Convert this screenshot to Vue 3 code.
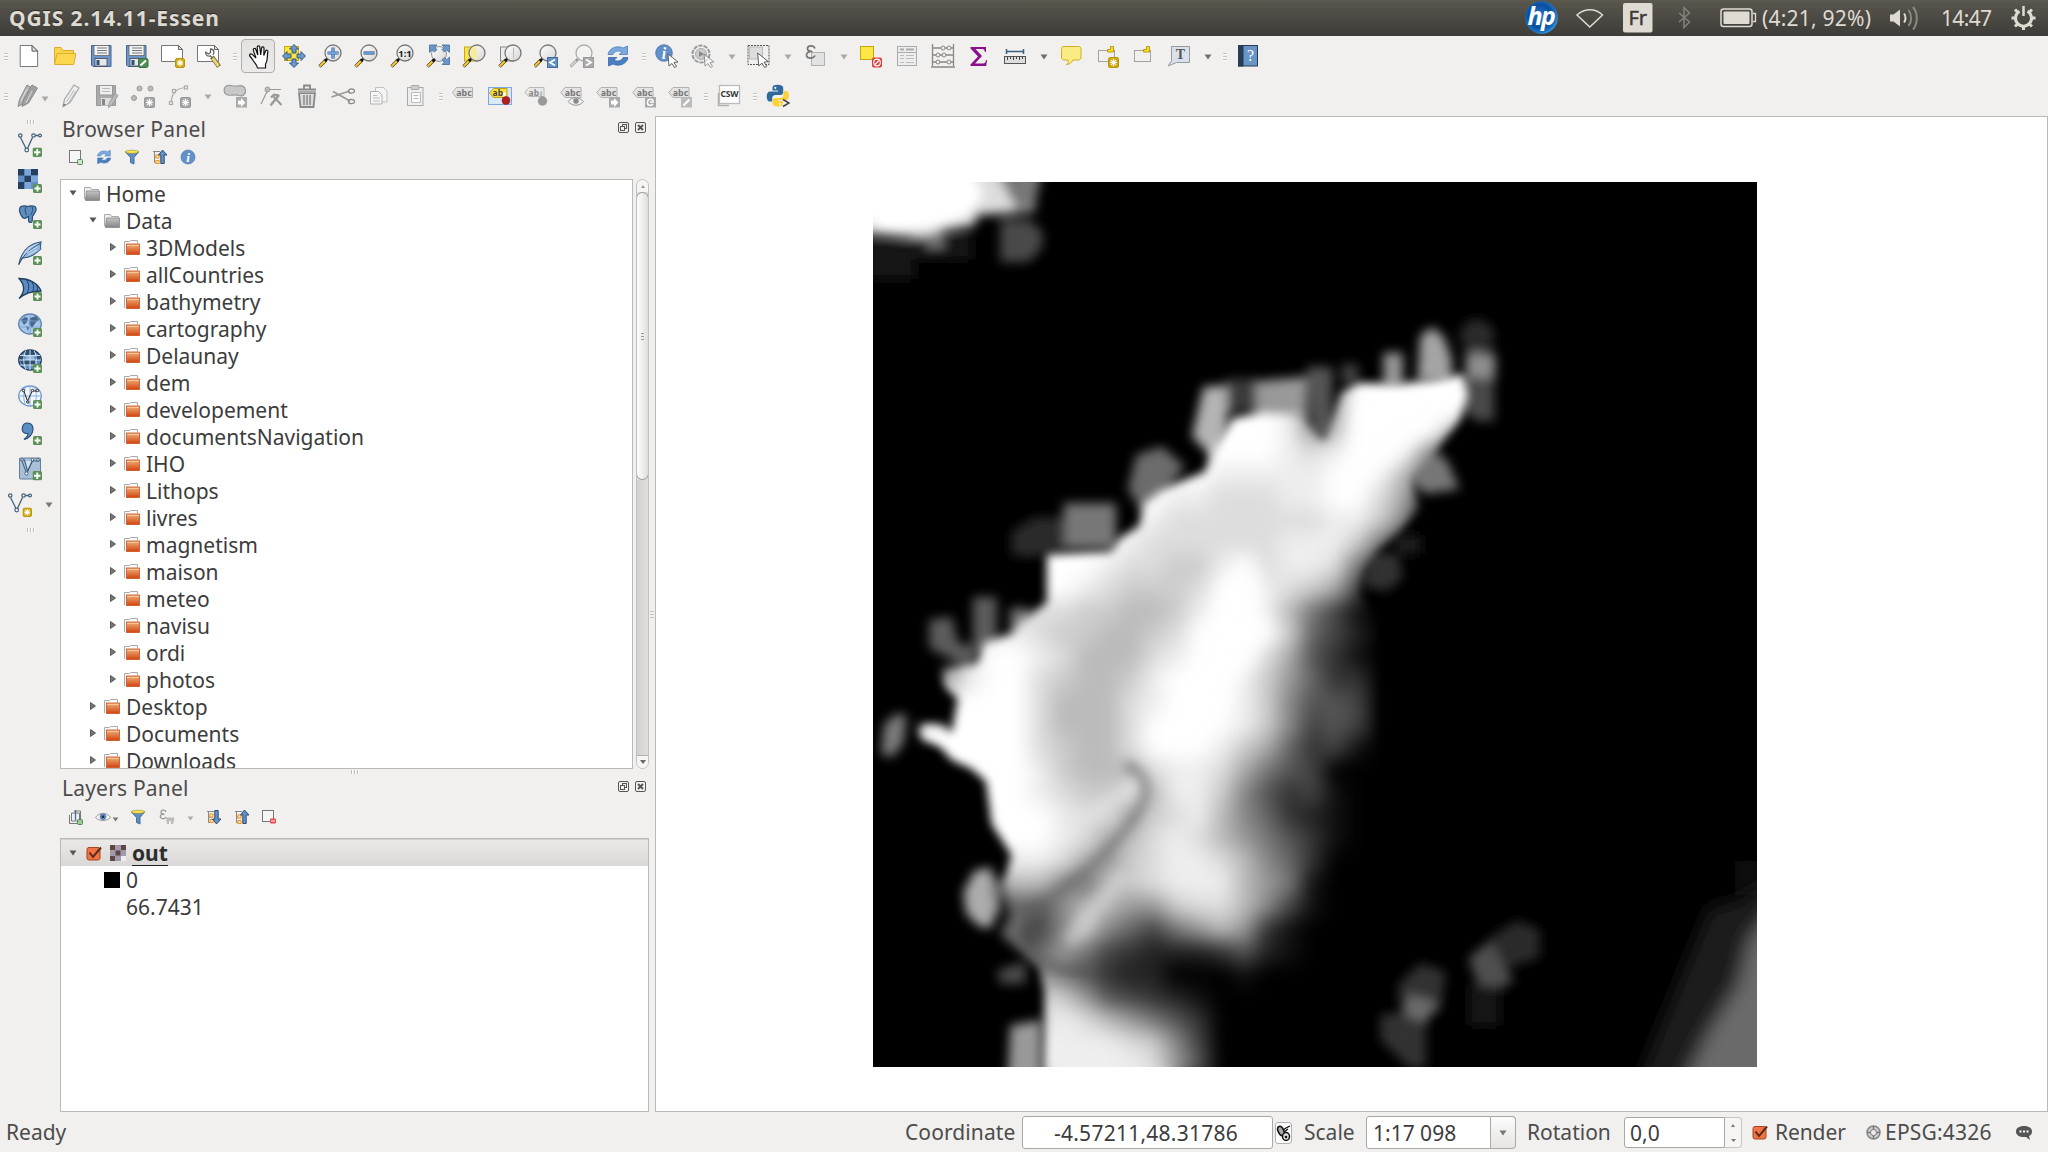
<script setup>
const h = { k: 'handle' }
const a = { k: 'arrow' }
const ad = { k: 'arrow', dark: true }
const i = (...names) => names.map((n) => ({ k: 'icon', n }))

const rowOne = [
  h, ...i('new', 'open', 'save', 'saveas', 'newprint', 'composer'),
  h, { k: 'icon', n: 'hand', on: true },
  ...i('pan', 'zoomin', 'zoomout', 'zoomone', 'zoomfull', 'zoomsel', 'zoomlayer', 'zoomlast', 'zoomnext', 'refresh'),
  h, ...i('identify', 'action'), a, ...i('select'), a, ...i('expr'), a,
  ...i('deselect', 'table', 'abacus', 'sigma', 'measure'), ad,
  ...i('tip', 'newbookmark', 'bookmark', 'annotation'), ad,
  h, ...i('help'),
]
const rowTwo = [
  h, { k: 'icon', n: 'pencils', wide: true }, ...i('pencil', 'saveedit', 'points', 'curve'), a,
  ...i('blob', 'node', 'trash', 'cut', 'copy', 'paste'),
  h, ...i('label', 'labelpin', 'labelball', 'labeleye', 'labelmove', 'labelrotate', 'labeledit'),
  h, ...i('csw'), h, ...i('python'),
]
const leftBar = ['vector', 'raster', 'postgis', 'spatialite', 'mssql', 'wms', 'wcs', 'wfs', 'comma', 'virtual']
const browserTools = ['addlayer', 'refresh', 'filter', 'collapse', 'info']

const tree = [
  { t: 'Home', l: 0, open: true },
  { t: 'Data', l: 1, open: true },
  ...['3DModels', 'allCountries', 'bathymetry', 'cartography', 'Delaunay', 'dem', 'developement',
    'documentsNavigation', 'IHO', 'Lithops', 'livres', 'magnetism', 'maison', 'meteo', 'navisu',
    'ordi', 'photos'].map((t) => ({ t, l: 2 })),
  { t: 'Desktop', l: 1 },
  { t: 'Documents', l: 1 },
  { t: 'Downloads', l: 1 },
]

// Elevation samples on a 40-unit lattice, one hex digit per sample (0 = black, f = white)
const samples = [
  'ffffffffffffffffea9fffffff',
  'ffffffffffffffffe7afffffff',
  'ffffffffffffffffe9bffffc80',
  'ffffffffffffffffedeffe9600',
  'fffffffffffffeeeeeffeb7500',
  'fffffffffffeedddeeffda3000',
  'ffffffffffedddddddeec80000',
  'fffffffffeddddddeeec730000'.slice(0, 26),
  'ffffffffeddccefdeed7300000',
  'fffffffedcccdffedca4000000',
  'eeeedddccbbceffeb741000000',
  'eeeeedccbbcdffffc642000000',
  'bceffedbbbdefffda531000000',
  'aaeffdcbbcefffec9633000000',
  'fffffdbbbdefffec8554000000',
  'fffffdbbbdffffec8454000000',
  'fffffdcbbdfffeca6341000000',
  'fffffecbbbdeeda75400000000',
  'fffffedccdbeec853410000000',
  'ffffffeddacdeb863210000000',
  'ffffffedabdedb975310000000',
  'eeeeeeda9cdeedb86300000000',
  'aaaabb87bcdeeeb97100000000',
  '6666658bb99cddb84100000000',
  '5555548c86479b931000000000',
  '44444697432223521000000000',
  '33333975322000100000000000',
  '22222dc9543210000000000000',
  '44444dedb97530000000000000',
  '77777eeeedc840000000000000',
  '88888eeeeed950000000000000',
]
const cells = samples.flatMap((row, r) =>
  [...row].map((d, c) => {
    const g = parseInt(d, 16) * 17
    return { x: 80 + c * 40, y: 340 + r * 40, fill: `rgb(${g},${g},${g})` }
  }),
)
</script>

<template>
  <div class="app">
    <svg class="defs" width="0" height="0">
      <defs>
        <linearGradient id="g-orange" x1="0" y1="0" x2="0" y2="1"><stop offset="0" stop-color="#eeb27c" /><stop offset="1" stop-color="#d3430f" /></linearGradient>
        <linearGradient id="g-grey" x1="0" y1="0" x2="0" y2="1"><stop offset="0" stop-color="#c4c4c4" /><stop offset="1" stop-color="#848484" /></linearGradient>
        <linearGradient id="g-lens" x1="0" y1="0" x2="1" y2="1"><stop offset="0" stop-color="#fff" /><stop offset="1" stop-color="#d4d6d4" /></linearGradient>
        <radialGradient id="g-hp" cx=".45" cy=".45" r=".6"><stop offset="0" stop-color="#2478c8" /><stop offset=".6" stop-color="#0a4d9e" /><stop offset=".85" stop-color="#1b78c8" /><stop offset="1" stop-color="#4cc0f2" /></radialGradient>
      </defs>
    </svg>
    <svg class="symbols">
      <symbol id="plus" viewBox="0 0 9 9"><rect width="9" height="9" rx="1.6" fill="#5b9057" /><path d="M4.5 1.5v6M1.500 4.500h6" stroke="#fff" stroke-width="1.800" /></symbol>
      <symbol id="star" viewBox="0 0 10 10"><rect x=".5" y=".5" width="9" height="9" rx="1.6" fill="#d0ab10" stroke="#b8950a" /><path d="M5 1.6v6.8M1.8 5h6.4M2.6 2.8l4.8 4.4M7.4 2.8L2.6 7.2" stroke="#fff" stroke-width="1.1" /></symbol>
      <symbol id="stargrey" viewBox="0 0 10 10"><rect x=".5" y=".5" width="9" height="9" rx="1.4" fill="#a8a8a8" stroke="#999" /><path d="M5 1.6v6.8M1.8 5h6.4M2.6 2.8l4.8 4.4M7.4 2.8L2.6 7.2" stroke="#fff" stroke-width="1.1" /></symbol>
      <symbol id="lens" viewBox="0 0 24 24"><path d="M1.500 22.500L8 16" stroke="#444" stroke-width="3.400" /><path d="M1.700 22.300L7 17" stroke="#f6c52c" stroke-width="2.200" /><path d="M7 17l2.600-2.600" stroke="#111" stroke-width="2.600" /><circle cx="15" cy="9" r="8" fill="url(#g-lens)" stroke="#777" stroke-width="1.300" /></symbol>

      <symbol id="new" viewBox="0 0 24 24"><path d="M3.2 1.5H15l5.6 5.6v15.4H3.2z" fill="#fff" stroke="#777" /><path d="M15 1.5l5.6 5.6H15z" fill="#e4e4e4" stroke="#555" /></symbol>
      <symbol id="open" viewBox="0 0 24 24"><path d="M1.500 20.500V3.500h6.500l2 3h10.500v4.500" fill="#fbd44a" stroke="#dca92c" /><path d="M1.500 20.500L4 9.500h18.800l-2 11z" fill="#fdd84f" stroke="#dfae2e" /></symbol>
      <symbol id="save" viewBox="0 0 24 24"><path d="M2.500 1.500h19.500v21H4l-1.500-1.500z" fill="#6b97cb" stroke="#44658f" /><rect x="5" y="1.500" width="15" height="10" fill="#f4f4f4" stroke="#666" stroke-width=".8" /><path d="M8 4h10M8 6.500h10M8 9h10" stroke="#777" /><rect x="6" y="14.500" width="12" height="7.500" fill="#e8e8e8" stroke="#445" stroke-width=".8" /><rect x="7.500" y="16" width="3" height="5" fill="#2f5177" /></symbol>
      <symbol id="saveas" viewBox="0 0 24 24"><use href="#save" width="24" height="24" x="-1" /><rect x="13.500" y="14.500" width="9.500" height="9" rx="1.500" fill="#4f8c55" stroke="#39743f" /><path d="M15.500 21.500l5.500-5" stroke="#fff" stroke-width="2" /></symbol>
      <symbol id="newprint" viewBox="0 0 24 24"><path d="M.5 1.500h17l4 4v12H.5z" fill="#fff" stroke="#777" /><path d="M17.500 1.500v4h4z" fill="#ddd" stroke="#666" /><use href="#star" x="14" y="14" width="10" height="10" /></symbol>
      <symbol id="composer" viewBox="0 0 24 24"><path d="M.5 1.500h17l4 4v12H.5z" fill="#fff" stroke="#777" /><path d="M17.500 1.500v4h4z" fill="#ddd" stroke="#666" /><path d="M15 13l7 9.500" stroke="#665a22" stroke-width="4.600" /><path d="M15.500 14l6 8" stroke="#e8d27a" stroke-width="3" /><path d="M8.500 7.500c0 4 2 5 5 4.500l2 2M8.500 8l3 2 2-1.500V5c4 0 4 4 2.500 6" fill="none" stroke="#666" stroke-width="1.300" /></symbol>
      <symbol id="hand" viewBox="0 0 24 24"><path d="M9.500 23c-.5-3-2.500-4.500-4-7C4.200 13.700 3 12.300 1.800 11c-.9-1.800 1.200-2.700 2.700-1.400L8 13 5.300 5.200c-.4-1.800 1.900-2.400 2.500-.7l2 5.500-.6-7.700c0-1.800 2.400-1.900 2.600-.1l.9 7.800.9-7c.2-1.700 2.400-1.400 2.400.3l-.2 7.200 1.700-4.500c.7-1.500 2.600-.8 2.300.8-.7 4.500 0 9-2.300 12.200v4z" fill="#fff" stroke="#111" stroke-width="1.200" /></symbol>
      <symbol id="pan" viewBox="0 0 24 24"><rect x="2.500" y="2.500" width="14" height="14" fill="#fde43d" stroke="#c5a70e" /><g fill="#6b97cb" stroke="#2e5580" stroke-width=".9"><path d="M12 .5l4.500 4.500H14v4h-4V5H7.500zM12 23.500L7.500 19H10v-4h4v4h2.500zM.5 12L5 7.500V10h4v4H5v2.500zM23.500 12L19 16.500V14h-4v-4h4V7.500z" /></g></symbol>
      <symbol id="zoomin" viewBox="0 0 24 24"><use href="#lens" width="24" height="24" /><path d="M15 3.500v11M9.500 9h11" stroke="#355f91" stroke-width="3.200" /><path d="M15 4v10M10 9h10" stroke="#6fa2db" stroke-width="1.800" /></symbol>
      <symbol id="zoomout" viewBox="0 0 24 24"><use href="#lens" width="24" height="24" /><path d="M9.500 9h11" stroke="#355f91" stroke-width="3.200" /><path d="M10 9h10" stroke="#6fa2db" stroke-width="1.800" /></symbol>
      <symbol id="zoomone" viewBox="0 0 24 24"><use href="#lens" width="24" height="24" /><text x="15" y="12.500" text-anchor="middle" font-family="Noto Sans, sans-serif" font-size="9.500" font-weight="700" fill="#222">1:1</text></symbol>
      <symbol id="zoomfull" viewBox="0 0 24 24"><circle cx="13" cy="10" r="7.500" fill="url(#g-lens)" stroke="#999" /><path d="M1.500 22.500L8 16" stroke="#444" stroke-width="3.400" /><path d="M1.700 22.300L7 17" stroke="#f6c52c" stroke-width="2.200" /><path d="M6.500 17.500L9 15" stroke="#111" stroke-width="2.600" /><g fill="#6b97cb" stroke="#41699a" stroke-width=".8"><path d="M3.500 1h7.500L8.700 3.300l2.300 2.300-2.500 2.500-2.300-2.300L3.500 8.500zM23.500 1v7.500l-2.700-2.700-2.300 2.300L16 5.600l2.300-2.300L16 1zM23.500 20.500H16l2.300-2.300-2.300-2.300 2.500-2.500 2.300 2.300 2.700-2.700z" /></g></symbol>
      <symbol id="zoomsel" viewBox="0 0 24 24"><rect x="2.500" y="3" width="13" height="14" fill="#fde34a" stroke="#c8a80e" /><use href="#lens" width="24" height="24" /><path d="M15 2.500v13c-4 0-6.500-2.500-6.500-6.500S11 2.500 15 2.500z" fill="#f6ec9b" /></symbol>
      <symbol id="zoomlayer" viewBox="0 0 24 24"><rect x="2.500" y="3" width="13" height="14" fill="#ededed" stroke="#888" /><use href="#lens" width="24" height="24" /><path d="M15.500 3.500v11" stroke="#bbb" /></symbol>
      <symbol id="zoomlast" viewBox="0 0 24 24"><use href="#lens" width="24" height="24" x="-1" /><rect x="13.500" y="13.500" width="10" height="10" fill="#6090c5" stroke="#426c9d" /><path d="M21 15.500l-5 3 5 3" fill="none" stroke="#fff" stroke-width="1.800" /></symbol>
      <symbol id="zoomnext" viewBox="0 0 24 24"><path d="M.5 22.500L8 15" stroke="#999" stroke-width="3" /><path d="M1 22l5-5" stroke="#ddd" stroke-width="1.500" /><circle cx="14" cy="9" r="8" fill="#f3f3f2" stroke="#aaa" stroke-width="1.300" /><rect x="13.500" y="13.500" width="10" height="10" fill="#aaa" stroke="#999" /><path d="M16 15.500l5 3-5 3" fill="none" stroke="#fff" stroke-width="1.800" /></symbol>
      <symbol id="refresh" viewBox="0 0 24 24"><path d="M2 10.500C3 4 11 1 17 4l4.500-2v8.500H13L16 8c-3.500-2-7.500-1-9 2.500z" fill="#7da9dc" stroke="#4a7fc0" stroke-width=".8" /><path d="M22 13.500c-1 6.500-9 9.500-15 6.500L2.500 22v-8.500H11L8 16c3.500 2 7.500 1 9-2.500z" fill="#4a7fc1" stroke="#3769aa" stroke-width=".8" /></symbol>
      <symbol id="cursor" viewBox="0 0 12 15"><path d="M1 1l10 8-4 .5 2.500 4-2 1-2.500-4-3 2.500z" fill="#fff" stroke="#555" stroke-width=".9" /></symbol>
      <symbol id="info" viewBox="0 0 24 24"><circle cx="12" cy="12" r="10.500" fill="#6290c8" stroke="#4a76aa" /><text x="12" y="19" text-anchor="middle" font-family="Liberation Serif, serif" font-size="20" font-style="italic" font-weight="700" fill="#fff">i</text></symbol>
      <symbol id="identify" viewBox="0 0 24 24"><use href="#info" x="-.5" y="-.5" width="19" height="19" /><use href="#cursor" x="12" y="9" width="12" height="15" /></symbol>
      <symbol id="action" viewBox="0 0 24 24"><circle cx="10" cy="10" r="8.500" fill="#eee" stroke="#999" stroke-width="2" stroke-dasharray="4.200 1.100" /><circle cx="10" cy="10" r="5.500" fill="#ccc" stroke="#aaa" /><path d="M8 7l5 3-5 3z" fill="#888" /><use href="#cursor" x="12" y="9" width="12" height="15" opacity=".65" /></symbol>
      <symbol id="select" viewBox="0 0 24 24"><rect x="1" y="1.500" width="21" height="19" fill="none" stroke="#555" stroke-dasharray="2 1" /><rect x="2.500" y="3" width="13" height="12" fill="#ddd" stroke="#bbb" /><use href="#cursor" x="9" y="8" width="14" height="16" /></symbol>
      <symbol id="expr" viewBox="0 0 24 24"><rect x="8.500" y="8.500" width="13" height="13" fill="#e2e2e2" stroke="#b0b0b0" /><path d="M12 4.500C10 0 4 2 4.500 5c.3 2 2.500 2.500 5 2.500-4 0-6.500 1.500-6 4 .8 3.500 7 3.500 8.500 0" fill="none" stroke="#777" stroke-width="1.700" /></symbol>
      <symbol id="deselect" viewBox="0 0 24 24"><rect x="1.500" y="2.500" width="13" height="13" fill="#fde748" stroke="#c4a60b" /><rect x="13" y="13.500" width="10" height="10" rx="2" fill="#dd3a3e" /><circle cx="18" cy="18.500" r="3.300" fill="none" stroke="#fff" stroke-width="1.200" /><path d="M16 20.500l4-4" stroke="#fff" stroke-width="1.200" /></symbol>
      <symbol id="table" viewBox="0 0 24 24"><rect x="2.500" y="2.500" width="19" height="19" fill="#eee" stroke="#aaa" /><path d="M5 5.500h4M11 5.500h8" stroke="#aaa" stroke-width="2" /><path d="M3 8.500h18" stroke="#aaa" /><path d="M5 11.500h4M5 14.500h4M5 18.500h4M11 11.500h8M11 14.500h8M11 18.500h8" stroke="#bbb" stroke-width="1.200" /></symbol>
      <symbol id="abacus" viewBox="0 0 24 24"><path d="M1.500 0v22M22.500 0v22M0 23h24M1 4h22M1 11h22M1 18h22" stroke="#888" stroke-width="1.300" fill="none" /><g fill="#eee" stroke="#888"><circle cx="12" cy="4" r="2" /><circle cx="18" cy="4" r="2" /><circle cx="7" cy="11" r="2" /><circle cx="13" cy="11" r="2" /><circle cx="7" cy="18" r="2" /><circle cx="18" cy="18" r="2" /></g></symbol>
      <symbol id="sigma" viewBox="0 0 24 24"><path d="M3.500 3H19v5h-1c-.5-2-1-3-3-3H8.500l6.500 7-7 7.500h8c2 0 2.500-1 3-3.500h1l-.8 6H3.500v-1.500l7.500-8-7.500-8z" fill="#8a0f8c" /></symbol>
      <symbol id="measure" viewBox="0 0 24 24"><path d="M3.500 7.500h17M3.500 5v5M20.500 5v5" stroke="#38617f" stroke-width="1.500" /><rect x="1.500" y="12.500" width="21" height="7" fill="#ddd" stroke="#555" /><path d="M4.500 13v3M7.500 13v2M10.500 13v3M13.500 13v2M16.500 13v3M19.500 13v2" stroke="#444" /></symbol>
      <symbol id="tip" viewBox="0 0 24 24"><path d="M5 2.500h14.500c2 0 2.500 1 2.500 3v7.500c0 2-1 3-3 3h-5c-1.500 3-4 4.500-6.500 4.500 1.500-1 2-2.500 1.500-4.500H6c-2.500 0-3.500-1-3.500-3V5.500c0-2 .5-3 2.500-3z" fill="#f9ec85" stroke="#d1ad20" /></symbol>
      <symbol id="bookmark" viewBox="0 0 24 24"><rect x="3.500" y="6.500" width="16" height="11" fill="none" stroke="#555" stroke-dasharray="1 1" /><path d="M15.500 2.500h3V8h-6V5.500h3z" fill="#fddc2d" stroke="#bb9a0b" /></symbol>
      <symbol id="newbookmark" viewBox="0 0 24 24"><use href="#bookmark" width="24" height="24" /><use href="#star" x="13" y="13" width="11" height="11" /></symbol>
      <symbol id="annotation" viewBox="0 0 24 24"><path d="M4.500 2.500h18v16h-13L1 22l3.500-5z" fill="#d9e2ec" stroke="#999" /><text x="13.500" y="15" text-anchor="middle" font-family="Liberation Serif, serif" font-weight="700" font-size="14" fill="#555">T</text></symbol>
      <symbol id="help" viewBox="0 0 24 24"><rect x="2.500" y="1.500" width="19" height="20.500" fill="#6894c8" stroke="#273c52" /><rect x="2" y="1" width="5.500" height="21.500" fill="#263d55" /><text x="14.500" y="17" text-anchor="middle" font-family="Liberation Serif, serif" font-size="16" fill="#fff">?</text></symbol>

      <symbol id="pencil" viewBox="0 0 24 24"><path d="M4 22.500l1.500-7L15 1l5 3-9 14.500z" fill="#eee" stroke="#aaa" stroke-width="1.200" /><path d="M15 6L7.500 18M17 7L9.500 19" stroke="#bbb" /><path d="M4 22.500l.7-3 2.300 1.300z" fill="#777" /></symbol>
      <symbol id="pencils" viewBox="0 0 24 24"><g stroke="#888"><path d="M1 22.500l1.500-7L10 1l5 3-8 15z" fill="#b5b5b5" /><path d="M5 22.500l1.500-7L15 1l5.500 3-9 15z" fill="#a0a0a0" /><path d="M10 5L4 17M15 7L9 19" stroke="#ddd" /></g></symbol>
      <symbol id="saveedit" viewBox="0 0 24 24"><path d="M1.500 1.500h19v20h-19z" fill="#aaa" stroke="#999" /><rect x="4.500" y="1.500" width="13" height="9.500" fill="#eee" stroke="#999" /><path d="M7 4.500h8M7 7.500h8" stroke="#bbb" /><rect x="6" y="14" width="11" height="7.500" fill="#ddd" /><rect x="7" y="15" width="3" height="6" fill="#888" /><path d="M13.500 23.500l1-5 5.500-9 3 2-6 9.500z" fill="#bbb" stroke="#999" /></symbol>
      <symbol id="points" viewBox="0 0 24 24"><g fill="#bbb" stroke="#999"><circle cx="8.500" cy="4.500" r="2.500" /><circle cx="19.500" cy="4.500" r="2.500" /><circle cx="3" cy="14" r="2.500" /></g><use href="#stargrey" x="13" y="13" width="11" height="11" /></symbol>
      <symbol id="curve" viewBox="0 0 24 24"><g fill="none" stroke="#aaa" stroke-width="1.200"><path d="M4 19C5 8 9 4 20 3.500" /><g fill="#f1f0ee"><rect x="2.500" y="17.500" width="3" height="3" /><rect x="5.500" y="5.500" width="3" height="3" /><rect x="17.500" y="2" width="3" height="3" /></g></g><use href="#stargrey" x="13" y="13" width="11" height="11" /></symbol>
      <symbol id="blob" viewBox="0 0 24 24"><path d="M4.500 1.500c3.500-1 6 1.500 10 .5s7.500 0 8 4-2.500 7-7 5.500-7 .5-10.500-.5C0 10 0 3 4.500 1.500z" fill="#c8c8c8" stroke="#999" stroke-width="1.200" /><rect x="13" y="13" width="11" height="10.500" fill="#aaa" /><path d="M15 16.500h3V14l4.500 4.500L18 23v-2.500h-3z" fill="#fff" /></symbol>
      <symbol id="node" viewBox="0 0 24 24"><path d="M2 20L8 7.500M11 5.500h11" stroke="#999" stroke-width="1.200" /><circle cx="8.500" cy="5.500" r="2.500" fill="#bbb" stroke="#999" /><path d="M11.500 21.500L20 11" stroke="#999" stroke-width="2.400" /><path d="M12 13.500l3-3 5 1M14.500 12.500l8 8.500" fill="none" stroke="#999" stroke-width="2" /></symbol>
      <symbol id="trash" viewBox="0 0 24 24"><path d="M3 5.500h18M9 4.500v-3h6v3" fill="none" stroke="#888" stroke-width="1.800" /><path d="M4 9h16l-1.500 14H5.500z" fill="#ddd" stroke="#888" stroke-width="1.800" /><path d="M9 11v10M12 11v10M15 11v10" stroke="#888" stroke-width="1.500" /><path d="M3 8h18" stroke="#aaa" stroke-width="2" /></symbol>
      <symbol id="cut" viewBox="0 0 24 24"><path d="M2 7.500L19 17M.5 13l18-6" stroke="#999" stroke-width="1.600" /><ellipse cx="20.500" cy="7" rx="3" ry="2.200" fill="none" stroke="#888" stroke-width="1.300" /><ellipse cx="20.500" cy="17.500" rx="3" ry="2.200" fill="none" stroke="#888" stroke-width="1.300" /></symbol>
      <symbol id="copy" viewBox="0 0 24 24"><path d="M8.500 3.500h8l3.500 3.500v11h-11.500z" fill="#f4f4f4" stroke="#c0c0c0" /><path d="M3.500 7.500h8l3.500 3.500v9H3.500z" fill="#f7f7f7" stroke="#b0b0b0" /><path d="M6 11.500h4M6 14h7M6 17h7" stroke="#bbb" /></symbol>
      <symbol id="paste" viewBox="0 0 24 24"><rect x="4.500" y="3.500" width="15.500" height="18" fill="#eee" stroke="#aaa" /><rect x="8" y="1.500" width="8" height="4" rx="1" fill="#ccc" stroke="#aaa" /><path d="M8.500 8.500h9v10h-9z" fill="#fafafa" stroke="#bbb" /><path d="M10.500 11.500h5M10.500 14.500h5" stroke="#bbb" /></symbol>

      <symbol id="tag" viewBox="0 0 24 24"><path d="M5 3.500h16v10H5L.8 8.500z" fill="#e3e3e3" stroke="#b0b0b0" /><text x="12.500" y="11.800" text-anchor="middle" font-family="Noto Sans, sans-serif" font-size="8.800" font-weight="700" fill="#777">abc</text></symbol>
      <symbol id="label" viewBox="0 0 24 24"><use href="#tag" x="-.5" width="24" height="24" /></symbol>
      <symbol id="labelpin" viewBox="0 0 24 24"><rect x=".5" y="3.500" width="23" height="17" fill="#dbe8f8" stroke="#7aa9e2" /><path d="M5.500 4.500H19v9H5.500L1.500 9z" fill="#fbe03f" stroke="#bca216" /><text x="9.800" y="12" text-anchor="middle" font-family="Noto Sans, sans-serif" font-size="8.500" font-weight="700" fill="#444">ab</text><path d="M16.500 8.500v6" stroke="#fff" stroke-width="2.500" /><circle cx="18" cy="16.500" r="4" fill="#b01f24" stroke="#8b1519" stroke-width=".6" /></symbol>
      <symbol id="labelball" viewBox="0 0 24 24"><path d="M5 3.500h15v9H5L.8 8.500z" fill="#e8e8e8" stroke="#b8b8b8" /><text x="9.800" y="11.800" text-anchor="middle" font-family="Noto Sans, sans-serif" font-size="8.500" font-weight="700" fill="#888">ab</text><path d="M17 7.500v6" stroke="#bbb" stroke-width="2" /><circle cx="18.500" cy="17" r="4.700" fill="#999" /></symbol>
      <symbol id="labeleye" viewBox="0 0 24 24"><use href="#tag" width="24" height="24" /><path d="M8 17.500c4-5 11-5 15.500 0-4 5-11 5-15.500 0z" fill="#eee" stroke="#999" /><circle cx="16" cy="17" r="2.700" fill="#888" /></symbol>
      <symbol id="labelmove" viewBox="0 0 24 24"><use href="#tag" width="24" height="24" /><rect x="13" y="13" width="11" height="10.500" fill="#aaa" /><path d="M15 16.500h3V14l4.500 4.500L18 23v-2.500h-3z" fill="#fff" /></symbol>
      <symbol id="labelrotate" viewBox="0 0 24 24"><use href="#tag" width="24" height="24" /><rect x="13" y="13" width="11" height="10.500" fill="#aaa" /><path d="M21 17c0-2-5-3-5.500 1s4 4 5.500 2M18 18l4 0" fill="none" stroke="#fff" stroke-width="1.500" /></symbol>
      <symbol id="labeledit" viewBox="0 0 24 24"><use href="#tag" width="24" height="24" /><rect x="13" y="13" width="11" height="10.500" fill="#bbb" /><path d="M15.500 21.500l6-6" stroke="#fff" stroke-width="2.200" /></symbol>
      <symbol id="csw" viewBox="0 0 24 24"><path d="M1.500 9v12.500H12" fill="#eee" stroke="#b0b0b0" stroke-width="1.500" /><rect x="2.500" y="1.500" width="20" height="18" fill="#fff" stroke="#bbb" stroke-width="1.300" /><text x="12.500" y="13" text-anchor="middle" font-family="Noto Sans, sans-serif" font-size="8.500" font-weight="700" fill="#333" textLength="18">CSW</text></symbol>
      <symbol id="python" viewBox="0 0 24 24"><path d="M11.500.8c-3.500 0-5 1-5 3v2.700h5.500v1H4c-2 0-3.300 2-3.300 5s1.300 5 3 5h2.500V14c0-2 1.500-3 3.500-3h4.500c2 0 3-1.200 3-3V3.800c0-2-2.200-3-5.700-3z" fill="#2f6a9d" /><circle cx="9.300" cy="3.800" r="1.100" fill="#fff" /><path d="M12 22.500c3.500 0 5-1 5-3v-2.500h-5v-1h8c2 0 3-2 3-4.500s-1-4.500-3-4.500h-2.500V11c0 2-1.500 3-3.500 3H9.500c-2 0-3 1.200-3 3v2.500c0 2 2 3 5.500 3z" fill="#fbd038" /><circle cx="14" cy="20" r="1" fill="#fff" /><path d="M17 15.500l6 3.500-6 3.500" fill="none" stroke="#444" stroke-width="1.500" /></symbol>

      <symbol id="vshape" viewBox="0 0 24 24"><path d="M2.500 4.500L8 15.500M9.500 15.500l5-11M17 2.500h4" stroke="#42607c" stroke-width="1.300" /><g fill="#fff" stroke="#42607c" stroke-width="1.200"><circle cx="2.300" cy="2.500" r="1.700" /><circle cx="8.700" cy="17" r="1.800" /><circle cx="15.500" cy="2.500" r="1.700" /><circle cx="22" cy="2.500" r="1.400" /></g></symbol>
      <symbol id="vector" viewBox="0 0 24 24"><use href="#vshape" width="24" height="24" /><use href="#plus" x="14.500" y="14.500" width="9.500" height="9.500" /></symbol>
      <symbol id="vectornew" viewBox="0 0 24 24"><use href="#vshape" width="24" height="24" /><use href="#star" x="14.500" y="14.500" width="9.500" height="9.500" /></symbol>
      <symbol id="raster" viewBox="0 0 24 24"><rect width="20" height="20" fill="#5f8ec6" /><path d="M0 0h6.500v6.500H0zM13 0h7v6.500h-7zM6.500 6.500H13V13H6.500zM0 13h6.500v7H0z" fill="#243f5f" /><path d="M6.500 0H13v6.500H6.500zM13 6.500h7V13h-7zM6.500 13H13v7H6.500z" fill="#7da6d8" /><use href="#plus" x="15" y="15" width="9" height="9" /></symbol>
      <symbol id="postgis" viewBox="0 0 24 24"><path d="M3 1.500c3-1.300 5-.5 6.500 0 2.500-.8 4-.8 6-.3 2.500 0 3.500 3 1.500 6.300-1 1.500-1.500 3-2.500 3.500 0 3 0 5-.7 6-1.500 1-3.300.5-3.300-1.500v-4.200c-1.500.2-1.800 2.200-4 2.200C3 12.500-.5 4 3 1.500z" fill="#5f8dc0" stroke="#294e78" stroke-width="1.200" /><path d="M8 2c-1.500 3-1 5 .5 8M14 2c1.500 3 0 6-1.500 8" fill="none" stroke="#294e78" /><use href="#plus" x="15" y="15" width="9" height="9" /></symbol>
      <symbol id="spatialite" viewBox="0 0 24 24"><path d="M.8 23.500C3 12 9 3 23 .8c0 7-6 15-18 16" fill="#b9d2ee" stroke="#2f567f" stroke-width="1.100" /><path d="M.8 23.500C6 13 12 8 22 2.500L23 8C16 15 9 17 4 17z" fill="#8fb4dd" stroke="#294e78" stroke-width=".9" /><path d="M9 12l10-6M10 14l9-5" stroke="#d5e5f7" stroke-width=".9" /><use href="#plus" x="15" y="15" width="9" height="9" /></symbol>
      <symbol id="mssql" viewBox="0 0 24 24"><path d="M1 1.500c9 0 19 4 22 12.500-8 0-16 2-22 7.500C7 15 7 8 1 1.500z" fill="#5b8cc7" stroke="#20405f" stroke-width="1.300" /><path d="M8 2.500c4 5 3 10 1 14M13 4c3.500 4 3 8 1.500 11.500M18 7c2 3 1.500 5 1 8" fill="none" stroke="#20405f" /><use href="#plus" x="15" y="15" width="9" height="9" /></symbol>
      <symbol id="wms" viewBox="0 0 24 24"><ellipse cx="12" cy="11" rx="11.300" ry="10" fill="#a9c6e8" stroke="#5c83b0" stroke-width="1.300" /><path d="M3 7l4-3 3 1-1 4-3 3zM12 5l6-2 3 4-3 2-4 6-3-4zM8 13l3 1-1 4z" fill="#47688d" /><path d="M2 8h20M2 14h20M12 1v20" stroke="#7ca4d0" stroke-width=".8" /><use href="#plus" x="15" y="15" width="9" height="9" /></symbol>
      <symbol id="wcs" viewBox="0 0 24 24"><ellipse cx="12" cy="11" rx="11.300" ry="10" fill="#5c8cc5" stroke="#1f3a57" stroke-width="1.300" /><path d="M1.500 7h5v4h-5zM7 2h10v5H7zM17 7h5v4h-5zM7 11h10v5H7zM2 11h5v5H4z" fill="#24405e" opacity=".8" /><path d="M7.500 6.500h9V11h-9z" fill="#8fb6e5" /><path d="M2 6.500h20M1 11h22M2 16h20M12 1v20M8 1.500C5 7 5 15 8 20.500M16 1.500c3 5.500 3 13.500 0 19" stroke="#e0ecf9" stroke-width=".9" fill="none" /><use href="#plus" x="15" y="15" width="9" height="9" /></symbol>
      <symbol id="wfs" viewBox="0 0 24 24"><ellipse cx="12" cy="11" rx="11.300" ry="10" fill="#f1f6fc" stroke="#6c99cd" stroke-width="1.300" /><path d="M1 11h22M12 1v20M8 1.500C5 7 5 15 8 20.500M16 1.500c3 5.500 3 13.500 0 19" stroke="#8bb2df" fill="none" /><path d="M6 6.500l3.500 9.500L14 6.500M15 6h4" stroke="#222" fill="none" /><g fill="#fff" stroke="#222"><circle cx="5.500" cy="5.500" r="1.200" /><circle cx="9.800" cy="17" r="1.200" /><circle cx="14.500" cy="5.500" r="1.200" /><circle cx="19.500" cy="5.500" r="1.200" /></g><use href="#plus" x="15" y="15" width="9" height="9" /></symbol>
      <symbol id="comma" viewBox="0 0 24 24"><path d="M9.500 2c4 0 6 3 5.500 7-.5 4.500-4 8.500-9 9.500 2.500-2 4-4 4-6C6 13 4 10.500 4.200 7.500 4.500 4.500 6.500 2 9.500 2z" fill="#5b8cc4" stroke="#274b73" stroke-width="1.100" /><use href="#plus" x="15" y="15" width="9" height="9" /></symbol>
      <symbol id="virtual" viewBox="0 0 24 24"><rect x="1.500" y="1" width="21" height="21" rx="1" fill="#a9c0d9" stroke="#637f9c" /><path d="M2.500 3h4l3 11 5-10h7" fill="#d5e1ee" stroke="#3f5d7a" stroke-width="1.100" /><g fill="#fff" stroke="#3f5d7a"><circle cx="4" cy="2.800" r="1.300" /><circle cx="8.500" cy="16.500" r="1.600" /><circle cx="14.500" cy="2.800" r="1.300" /><circle cx="20" cy="2.800" r="1.300" /></g><path d="M4 4l4 11M9.500 15L14 4" stroke="#3f5d7a" /><use href="#plus" x="14.500" y="14" width="9.500" height="9.500" /></symbol>

      <symbol id="addlayer" viewBox="0 0 16 16"><rect x="1.500" y="1.500" width="11" height="12" fill="#f6f6f6" stroke="#777" /><rect x="9.500" y="10.500" width="5" height="5" rx="1" fill="#cfe6cd" stroke="#4f8c50" /></symbol>
      <symbol id="dellayer" viewBox="0 0 16 16"><rect x="1.500" y="1.500" width="11" height="11" fill="#f6f6f6" stroke="#777" /><rect x="9" y="9.500" width="6" height="5" rx="1" fill="#e8484c" /><path d="M10 12h4" stroke="#fff" /></symbol>
      <symbol id="filter" viewBox="0 0 16 16"><path d="M1.500 3h13L10 8.500V15l-3.500-1.500v-5z" fill="#5f8ec3" stroke="#456f9f" /><ellipse cx="8" cy="2.800" rx="6.800" ry="1.600" fill="#fbe44c" stroke="#8a8338" stroke-width=".6" /></symbol>
      <symbol id="collapse" viewBox="0 0 16 16"><path d="M1 2.500h7M2.500 2.500v11M2.500 8H6M2.500 13.500H6" stroke="#888" fill="none" /><rect x="4" y="6" width="3" height="3" fill="#fdebc0" stroke="#f0951a" /><rect x="4" y="11.500" width="3" height="3" fill="#fdebc0" stroke="#f0951a" /><path d="M10.500 1L15 6h-2.800v8.500H8.800V6H6.500z" fill="#6291c8" stroke="#2d4f76" /></symbol>
      <symbol id="expand" viewBox="0 0 16 16"><path d="M1 2.500h7M2.500 2.500v11M2.500 8H6M2.500 13.500H6" stroke="#888" fill="none" /><rect x="4" y="5" width="3" height="3" fill="#fdebc0" stroke="#f0951a" /><rect x="4" y="10.500" width="3" height="3" fill="#fdebc0" stroke="#f0951a" /><path d="M10.500 15L15 10h-2.800V1.500H8.800V10H6.500z" fill="#6291c8" stroke="#2d4f76" /></symbol>
      <symbol id="group" viewBox="0 0 16 16"><path d="M1.500 6v8.500h8M3.500 4v8h8V4zM6 2h6.500v8" fill="none" stroke="#777" /><path d="M7.500 1v10" stroke="#3f6fa8" stroke-width="1.300" /><rect x="9.500" y="10.500" width="5" height="5" rx="1" fill="#9cc99a" stroke="#4f8c50" /></symbol>
      <symbol id="eye" viewBox="0 0 16 16"><path d="M.5 8.500C4 3 12 3 15.500 8.500 12 12.500 4 12.500.5 8.500z" fill="#f5f5f5" stroke="#999" /><circle cx="8" cy="7.800" r="3.300" fill="#5c89bd" /><circle cx="8" cy="7.800" r="1.300" fill="#1b2b3c" /></symbol>
      <symbol id="exprfilter" viewBox="0 0 16 16"><path d="M7 3C6 0 1.500 1 2 3.300c.3 1.300 2 1.700 3.500 1.700C2.500 5 1 6 1.300 7.800 2 10.500 6 10.300 7.300 8" fill="none" stroke="#999" stroke-width="1.300" /><path d="M7 8.500h8v3l-1 3.500h-2v-3h-2v3H8z" fill="#bbb" /></symbol>

      <symbol id="folder-open" viewBox="0 0 16 15"><path d="M.5 13V1.500h6l1 2h7V13z" fill="#eee" stroke="#aaa" /><path d="M1.500 14.500l1-9.500h13v9.500z" fill="url(#g-grey)" stroke="#888" stroke-width=".8" /></symbol>
      <symbol id="folder" viewBox="0 0 16 15"><path d="M.5 14V1.500h5l1-1h7v3" fill="#fafafa" stroke="#aaa" /><rect x="2.500" y="4" width="13" height="10.500" fill="url(#g-orange)" stroke="#c9511d" stroke-width=".8" /><path d="M3 5.500h12" stroke="#f7cfa8" stroke-width=".8" /></symbol>
      <symbol id="down" viewBox="0 0 8 6"><path d="M.5.500h7L4 5.500z" fill="currentColor" /></symbol>
      <symbol id="right" viewBox="0 0 6 8"><path d="M.5.500v7L5.500 4z" fill="#777" stroke="#444" stroke-width=".8" /></symbol>
      <symbol id="check" viewBox="0 0 16 15"><rect x="1" y="1.500" width="13" height="12.500" rx="2" fill="#ee7346" stroke="#a9431c" /><path d="M3.500 6.500l3.500 4.500 8-9.500" fill="none" stroke="#5b2a18" stroke-width="2" /></symbol>
    </svg>

    <header class="titlebar">
      <span class="title">QGIS 2.14.11-Essen</span>
      <svg class="indicators" width="533" height="36" viewBox="1515 0 533 36">
        <circle cx="1541.500" cy="17.500" r="16.300" fill="url(#g-hp)" />
        <text x="1541" y="25" text-anchor="middle" class="hp">hp</text>
        <path d="M1577 15c8-7 18-7 25.500 0L1589.800 27z" fill="none" stroke="#dfdbd2" stroke-width="1.500" />
        <rect x="1623" y="3" width="29.500" height="29.500" rx="2" fill="#dfdbd2" />
        <text x="1637.700" y="24.500" text-anchor="middle" class="lang">Fr</text>
        <path d="M1679 13l10.500 9-5.500 5.500V7.500l5.500 5.500-10.500 9" fill="none" stroke="#85827b" stroke-width="1.500" />
        <rect x="1721" y="9" width="31" height="17.500" rx="2.500" fill="none" stroke="#dfdbd2" stroke-width="1.500" /><rect x="1723.500" y="11.500" width="26" height="12.500" rx="1" fill="#dfdbd2" /><path d="M1753 13.500h2.500v8h-2.500" fill="none" stroke="#dfdbd2" stroke-width="1.300" />
        <text x="1762" y="25.500" class="ind" textLength="109">(4:21, 92%)</text>
        <path d="M1890 14.500h3.500l6.500-5v17l-6.500-5h-3.500z" fill="#dfdbd2" />
        <path d="M1904 13.500c2 2.500 2 6.500 0 9" fill="none" stroke="#dfdbd2" stroke-width="2" />
        <path d="M1908.500 10c3.500 4.500 3.500 11.500 0 16M1913 7c5 6 5 16.500 0 22.500" fill="none" stroke="#8b8881" stroke-width="2" />
        <text x="1941" y="25.500" class="ind" textLength="51">14:47</text>
        <path d="M2019.500 11.200a8 8 0 1 0 8 0" fill="none" stroke="#dfdbd2" stroke-width="3" /><path d="M2023.500 6v10" stroke="#dfdbd2" stroke-width="2.500" /><g stroke="#dfdbd2" stroke-width="3"><path d="M2011.500 18h4M2031.500 18h4M2023.500 26v4M2015 26.500l2.800-2.800M2032 26.500l-2.800-2.800M2015 9.500l2.500 2.500M2032 9.500l-2.500 2.500" /></g>
      </svg>
    </header>

    <div v-for="(row, r) in [rowOne, rowTwo]" :key="r" class="toolbar">
      <template v-for="(c, n) in row" :key="n">
        <span v-if="c.k === 'handle'" class="handle" :class="{ first: n === 0 }"><i></i><i></i><i></i></span>
        <span v-else-if="c.k === 'arrow'" class="drop" :class="{ dark: c.dark }"><svg width="8" height="6"><use href="#down" /></svg></span>
        <span v-else class="tool" :class="{ on: c.on, wide: c.wide }">
          <svg width="24" height="24"><use :href="'#' + c.n" /></svg>
          <svg v-if="c.wide" class="mini" width="8" height="6"><use href="#down" /></svg>
        </span>
      </template>
    </div>

    <main class="body">
      <nav class="leftbar">
        <span class="vhandle"><i></i><i></i><i></i></span>
        <span v-for="n in leftBar" :key="n" class="ltool"><svg width="24" height="24"><use :href="'#' + n" /></svg></span>
        <span class="ltool last"><svg width="24" height="24"><use href="#vectornew" /></svg><svg class="larrow" width="8" height="6"><use href="#down" /></svg></span>
        <span class="vhandle end"><i></i><i></i><i></i></span>
      </nav>

      <section class="docks">
        <div class="dock browser">
          <div class="head">
            <span>Browser Panel</span>
            <svg width="28" height="11" viewBox="0 0 28 11" class="ctl"><g fill="none" stroke="#555"><rect x=".5" y=".5" width="10" height="10" rx="1.500" /><rect x="4.500" y="2.500" width="4" height="4" /><rect x="2.500" y="4.500" width="4" height="4" fill="#f1f0ee" /><rect x="17.500" y=".5" width="10" height="10" rx="1.500" /><path d="M20 3l5 5M25 3l-5 5" stroke-width="1.900" /></g></svg>
          </div>
          <div class="ptools">
            <svg v-for="n in browserTools" :key="n" width="16" height="16"><use :href="'#' + n" /></svg>
          </div>
          <div class="treewrap">
            <ul class="tree">
              <li v-for="n in tree" :key="n.t" :class="'l' + n.l">
                <span class="tw"><svg v-if="n.open" width="8" height="6"><use href="#down" /></svg><svg v-else width="6" height="8"><use href="#right" /></svg></span>
                <svg width="16" height="15"><use :href="n.open ? '#folder-open' : '#folder'" /></svg>
                <span class="name">{{ n.t }}</span>
              </li>
            </ul>
            <div class="scroll">
              <span class="cap"><svg width="4" height="3" viewBox="0 0 4 3"><path d="M2 0l2 3H0z" fill="#999" /></svg></span>
              <span class="thumb"><i></i><i></i><i></i></span>
              <span class="trough"></span>
              <span class="cap bot"><svg width="6" height="4" viewBox="0 0 6 4"><path d="M0 0h6L3 4z" fill="#666" /></svg></span>
            </div>
          </div>
        </div>

        <div class="split"><i></i><i></i><i></i></div>

        <div class="dock layers">
          <div class="head">
            <span>Layers Panel</span>
            <svg width="28" height="11" viewBox="0 0 28 11" class="ctl"><g fill="none" stroke="#555"><rect x=".5" y=".5" width="10" height="10" rx="1.500" /><rect x="4.500" y="2.500" width="4" height="4" /><rect x="2.500" y="4.500" width="4" height="4" fill="#f1f0ee" /><rect x="17.500" y=".5" width="10" height="10" rx="1.500" /><path d="M20 3l5 5M25 3l-5 5" stroke-width="1.900" /></g></svg>
          </div>
          <div class="ptools lay">
            <svg width="16" height="16"><use href="#group" /></svg>
            <svg width="16" height="16" class="g-eye"><use href="#eye" /></svg>
            <svg width="7" height="5" class="g-dark"><use href="#down" /></svg>
            <svg width="16" height="16" class="g-filter"><use href="#filter" /></svg>
            <svg width="16" height="16" class="g-mid"><use href="#exprfilter" /></svg>
            <svg width="7" height="5" class="g-light"><use href="#down" /></svg>
            <svg width="16" height="16" class="g-exp"><use href="#expand" /></svg>
            <svg width="16" height="16" class="g-mid"><use href="#collapse" /></svg>
            <svg width="16" height="16" class="g-del"><use href="#dellayer" /></svg>
          </div>
          <div class="laylist">
            <div class="lrow sel">
              <svg width="8" height="6" class="tri"><use href="#down" /></svg>
              <svg width="16" height="15" class="chk"><use href="#check" /></svg>
              <svg width="16" height="16" viewBox="0 0 16 16" class="ras"><rect width="16" height="16" fill="#a09aac" /><path d="M0 0h5v5H0zM11 0h5v5h-5zM5.500 5.500h5v5h-5zM0 11h5v5H0z" fill="#5f4644" /><path d="M11 11h5v5h-5z" fill="#eee" /></svg>
              <b>out</b>
            </div>
            <div class="lrow"><span class="swatch"></span><span class="name">0</span></div>
            <div class="lrow"><span class="swatch none"></span><span class="name">66.7431</span></div>
          </div>
        </div>
      </section>

      <div class="vsplit"><i></i><i></i><i></i></div>

      <section class="canvas">
        <svg class="dem" width="884" height="885" viewBox="6 4 1557 1559" preserveAspectRatio="none">
          <defs>
            <filter id="b5" x="-20%" y="-20%" width="140%" height="140%"><feGaussianBlur stdDeviation="8" /></filter>
            <filter id="b9" x="-40%" y="-40%" width="180%" height="180%"><feGaussianBlur stdDeviation="9" /></filter>
            <filter id="b18" x="-50%" y="-50%" width="200%" height="200%"><feGaussianBlur stdDeviation="16" /></filter>
            <filter id="grid" filterUnits="userSpaceOnUse" x="0" y="280" width="1200" height="1360" color-interpolation-filters="sRGB"><feGaussianBlur stdDeviation="17" /></filter>
            <path id="outline" d="M1045 343L1054 380 1040 425 1012 460 992 490 958 530 970 580 935 620 895 655 872 690 865 730 900 780 900 1450 640 1450 640 1620 305 1620 308 1430 298 1390 262 1330 275 1290 250 1270 235 1240 250 1190 215 1135 205 1060 180 1038 145 1022 120 995 85 975 100 962 145 972 155 915 130 880 190 850 200 815 250 800 270 775 312 745 312 660 425 655 440 632 475 610 482 570 515 545 590 515 605 475 640 420 690 410 760 412 800 460 830 375 860 358 930 360 1000 352z" />
            <mask id="shape" maskUnits="userSpaceOnUse" x="0" y="0" width="1570" height="1570">
              <use href="#outline" filter="url(#b5)" fill="#fff" />
            </mask>
          </defs>
          <rect width="1570" height="1570" fill="#000" />
          <g filter="url(#b9)">
            <path d="M-20-20H300L290 55 190 62 185 80 130 90 90 103 30 97 -20 95z" fill="#ddd" /><path d="M-20-20H180L200 30 170 65 110 85 30 92-20 60z" fill="#fff" /><path d="M220-20H305L290 50 260 55z" fill="#777" />
            <path d="M230 70h50l24 20v30l-24 25h-50z" fill="#484848" /><path d="M0 110h80v65H0zM80 100h100v40H80z" fill="#181818" /><path d="M100 95h30v25h-30z" fill="#777" />
            <ellipse cx="1070" cy="275" rx="30" ry="29" fill="#2c2c2c" /><path d="M1050 305h52v45h-52z" fill="#8d8d8d" /><path d="M1040 350h60v75h-30l-30-20z" fill="#4a4a4a" />
            <path d="M970 275l20-15 20 15 15 40v40h-60z" fill="#a4a4a4" /><path d="M905 305h34v60h-34z" fill="#999" /><path d="M770 330h45v120h-35z" fill="#555" /><path d="M832 325h28v35h-28z" fill="#444" />
            <path d="M588 365l42-3v75l-20 60-42-45z" fill="#b4b4b4" /><path d="M630 350h50v60h-50z" fill="#3a3a3a" /><path d="M680 355l90-8v80h-90z" fill="#999" />
            <path d="M455 545l15-60 45-15 40 35-30 40-45 40z" fill="#6c6c6c" /><path d="M342 570h92v80h-92z" fill="#777" /><path d="M250 660v-40l40-25h50v60l-60 10z" fill="#2c2c2c" />
            <path d="M182 735h42v90h-42zM105 775l40-5 10 45 40 10-20 40-40-25-30-15z" fill="#5c5c5c" /><path d="M248 755h35v45h-35z" fill="#777" />
            <path d="M25 960l20-18 20 0-5 50-20 25-20-5z" fill="#7a7a7a" /><path d="M128 860h55v40h-45z" fill="#aaa" /><path d="M85 960h50v30h-40z" fill="#bbb" />
            <path d="M165 1255l20-38 30-5 10 70-10 35-20 0-25-25z" fill="#acacac" /><path d="M215 1230l95 20v130h-20l-60-50 20-40-35-30z" fill="#666" /><path d="M222 1290v-25l22 0v30z" fill="#000" /><path d="M225 1392l50-15v40h-45z" fill="#484848" />
            <path d="M248 1490l55-10v110h-60z" fill="#999" />
            <path d="M970 470l45 20 24 55-60 8-30-20z" fill="#777" /><path d="M880 655l50 5 10 40-30 25-45-10z" fill="#333" /><path d="M920 625h50v35h-40z" fill="#1b1b1b" />
            <path d="M930 1420l40-40 45 15-10 70-45 15-25-20zM900 1470l80-5v100h-30l-50-50z" fill="#303030" /><path d="M950 1435l50 15-20 35-40-15z" fill="#6a6a6a" />
            <path d="M1055 1370l45-40 40-25 40 15 0 50-60 20-20 40-30-20z" fill="#292929" /><path d="M1055 1372l40-28 25 45 15 20-35 25-30-20z" fill="#505050" /><path d="M1055 1420h55v70h-55z" fill="#161616" />
            <path d="M1525 1200h60v60h-60z" fill="#101010" />
          </g>
          <g filter="url(#b18)">
            <path d="M1340 1620l90-220 50-120 40-5 100-60v420z" fill="#1a1a1a" /><path d="M1410 1640l70-140 50-80 20-80 60-80v380z" fill="#6a6a6a" />
          </g>
          <g mask="url(#shape)">
            <g filter="url(#grid)">
              <rect x="0" y="280" width="1200" height="80" fill="#fff" />
              <rect v-for="(c, n) in cells" :key="n" :x="c.x" :y="c.y" width="41" height="41" :fill="c.fill" />
              <rect x="300" y="1580" width="240" height="80" fill="#eee" />
            </g>
            <path filter="url(#b18)" d="M870 370L1050 340 1040 400 920 500 845 560 850 430z" fill="#fff" opacity=".8" />
            <path filter="url(#b18)" d="M672 670L685 720 695 800 650 880 590 980 520 990 580 870 610 760z" fill="#fff" opacity=".75" />
            <path filter="url(#b9)" d="M450 1030q55 25 25 80-40 60-90 105-60 45-110 85" fill="none" stroke="#606060" stroke-width="20" opacity=".5" />
            <path filter="url(#b9)" d="M470 1060q-60 55-130 75" fill="none" stroke="#e4e4e4" stroke-width="24" opacity=".45" />
            <path filter="url(#b9)" d="M350 1345l50-65 50-60" fill="none" stroke="#d8d8d8" stroke-width="26" opacity=".5" />
            <path filter="url(#b9)" d="M290 1370q40 25 100 25" fill="none" stroke="#555" stroke-width="20" opacity=".5" />
          </g>
        </svg>
      </section>
    </main>

    <footer class="status">
      <span class="ready">Ready</span>
      <span class="coordl">Coordinate</span>
      <span class="field coord">-4.57211,48.31786</span>
      <span class="mouse"><svg width="16" height="20" viewBox="0 0 16 20"><ellipse cx="5" cy="8" rx="2.800" ry="5" transform="rotate(-25 5 8)" fill="#aaa" stroke="#111" stroke-width="1.500" /><ellipse cx="10" cy="13.500" rx="3.500" ry="4" fill="#ddd" stroke="#111" stroke-width="1.500" /><path d="M7 7l3-2 4-2M8 9l4-3" stroke="#111" stroke-width="1.300" /><circle cx="10" cy="14" r="1.300" fill="#111" /></svg></span>
      <span class="scalel">Scale</span>
      <span class="combo"><span class="field sc">1:17 098</span><span class="btn"><svg width="8" height="6"><use href="#down" /></svg></span></span>
      <span class="rotl">Rotation</span>
      <span class="combo spin"><span class="field ro">0,0</span><span class="btn sp"><svg width="4" height="3" viewBox="0 0 4 3"><path d="M2 0l2 3H0z" fill="#777" /></svg><svg width="5" height="3" viewBox="0 0 5 3"><path d="M0 0h5L2.500 3z" fill="#777" /></svg></span></span>
      <svg class="rchk" width="16" height="15"><use href="#check" /></svg>
      <span class="render">Render</span>
      <svg class="globe" width="15" height="15" viewBox="0 0 15 15"><circle cx="7.500" cy="7.500" r="6.500" fill="#ccc" stroke="#888" stroke-width="1.500" /><path d="M7.500 1v13M1 7.500h13" stroke="#777" stroke-width="1.500" /><circle cx="7.500" cy="7.500" r="3" fill="#eee" stroke="#777" /></svg>
      <span class="epsg">EPSG:4326</span>
      <svg class="bubble" width="16" height="14" viewBox="0 0 16 14"><path d="M8 0c5 0 8 2.300 8 5.500 0 2.300-1 3.500-3 4.500l1 4-4-3C4 11.500 0 9.500 0 5.500 0 2.300 3 0 8 0z" fill="#555" /><path d="M3.500 5.500h2M7 5.500h2M10.500 5.500h2" stroke="#fff" stroke-width="2" /></svg>
    </footer>
  </div>
</template>

<style>
body { margin: 0; background: #f1f0ee; }
</style>

<style scoped>
* { box-sizing: border-box; }
.app { width: 2048px; height: 1152px; display: flex; flex-direction: column; overflow: hidden; background: #f1f0ee; color: #3c3c3c; font: 21px/27px "Noto Sans", "Open Sans", sans-serif; white-space: nowrap; }
svg { display: block; flex: none; }
.defs { position: absolute; }
.symbols { display: none; }
.titlebar { height: 36px; flex: none; display: flex; justify-content: space-between; align-items: center; padding-left: 9px; background: linear-gradient(#5c594f, #55524a 15%, #3d3c38); }
.title { color: #dfdbd2; font-weight: 700; font-size: 21px; letter-spacing: .9px; text-shadow: 0 -1px #2a2926; }
.hp { font: italic 700 25px "Noto Sans", sans-serif; fill: #fff; letter-spacing: -1.5px; }
.lang { font: 20px "Noto Sans", sans-serif; fill: #3c3b37; stroke: #3c3b37; stroke-width: .5; }
.ind { font: 21px "Noto Sans", sans-serif; fill: #dfdbd2; }

.toolbar { height: 40px; flex: none; display: flex; align-items: center; color: #aaa; }
.handle { width: 13px; padding-left: 6px; display: flex; flex-direction: column; gap: 2px; flex: none; }
.handle.first { width: 11px; padding-left: 4px; }
.handle i { width: 4px; height: 1px; background: #c4c2be; box-shadow: 0 1px #fff; }
.tool { width: 36px; height: 36px; display: flex; align-items: center; justify-content: center; flex: none; }
.tool.on svg { transform: translate(2px, 1px); }
.tool.on { width: 34px; height: 34px; margin: 0 1px; border: 1px solid #b0aeaa; border-radius: 4px; background: linear-gradient(#e3e2e0, #ecebe9); }
.tool.wide { width: 42px; justify-content: flex-start; padding-left: 6px; }
.tool .mini { margin: 5px 0 0 0; }
.drop { width: 20px; display: flex; justify-content: center; padding: 2px 0 0 1px; flex: none; }
.drop.dark { color: #6e6e6e; }

.body { flex: 1; display: flex; min-height: 0; }
.leftbar { width: 60px; display: flex; flex-direction: column; align-items: center; color: #777; }
.vhandle, .split { display: flex; gap: 2px; }
.vhandle { height: 11px; padding-top: 4px; }
.vhandle.end { padding-top: 5px; }
.vhandle i, .split i { width: 1px; height: 4px; background: #c0beba; box-shadow: 1px 0 #fff; }
.ltool { height: 36px; display: flex; align-items: center; flex: none; }
.ltool.last { width: 60px; padding-left: 8px; }
.larrow { margin-left: 13px; }
.docks { width: 589px; display: flex; flex-direction: column; }
.head { display: flex; align-items: center; justify-content: space-between; padding: 0 3px 0 2px; height: 27px; color: #4c4c4c; letter-spacing: .2px; }
.browser .head { margin-top: -1px; }
.head > span { padding-top: 2px; }
.ctl { margin-top: -2px; }
.browser { display: flex; flex-direction: column; height: 653px; }
.ptools { display: flex; align-items: center; height: 30px; padding-left: 7px; gap: 12px; }
.browser .ptools { height: 37px; padding: 0 0 7px 8px; }
.treewrap { display: flex; flex: 1; min-height: 0; justify-content: space-between; }
.tree { list-style: none; margin: 0; padding: 0; width: 573px; border: 1px solid #bbb9b4; background: #fff; overflow: hidden; }
.tree li { height: 27px; display: flex; align-items: center; color: #3c3c3c; }
.tree li > svg { margin-right: 6px; margin-top: -1px; }
.name { padding-top: 2px; }
.tree .tw { width: 23px; padding-left: 1px; display: flex; justify-content: center; margin-top: -2px; color: #555; }
.l0 { padding-left: 0; }
.l1 { padding-left: 20px; }
.l2 { padding-left: 40px; }
.scroll { width: 13px; display: flex; flex-direction: column; border-radius: 7px; border: 1px solid #c2c0bc; background: #dddcda; overflow: hidden; }
.cap { height: 12px; display: flex; align-items: center; justify-content: center; background: #f6f5f4; flex: none; }
.cap.bot { height: 13px; border-top: 1px solid #b5b3af; }
.thumb { height: 288px; margin: 0 -1px; border: 1px solid #9b9a97; border-radius: 7px; background: linear-gradient(90deg, #fcfcfc, #f1f1f0 45%, #dddddc); display: flex; flex-direction: column; align-items: center; justify-content: center; gap: 2px; flex: none; }
.thumb i { width: 3px; height: 1px; background: #999; }
.trough { flex: 1; background: linear-gradient(90deg, #d2d1cf, #dfdedc); }
.split { height: 7px; justify-content: center; padding: 1px 0 0; flex: none; }
.layers { flex: 1; display: flex; flex-direction: column; }
.layers .head { margin-top: -2px; }
.ptools.lay { gap: 0; height: 37px; padding: 0 0 6px 8px; }
.g-eye { margin-left: 11px; }
.g-dark { color: #777; margin: 5px 0 0 1px; }
.g-light { color: #aaa; margin: 3px 0 0 12px; }
.g-filter { margin-left: 11px; }
.g-mid { margin-left: 12px; }
.g-filter + .g-mid { margin-left: 13px; }
.g-exp { margin-left: 12px; }
.g-del { margin-left: 11px; }
.laylist { flex: 1; border: 1px solid #bbb9b4; background: #fff; }
.lrow { height: 27px; display: flex; align-items: center; padding-left: 43px; color: #3c3c3c; }
.lrow.sel { height: 27px; padding-left: 8px; background: linear-gradient(#eae9e8, #d9d8d6); border-top: 1px solid #d2d1ce; }
.tri { color: #555; }
.chk { margin-left: 9px; }
.ras { margin-left: 8px; }
.sel b { margin-left: 6px; line-height: 26px; height: 26px; border-bottom: 1px solid #222; color: #2c2c2c; }
.swatch { width: 16px; height: 16px; background: #000; margin-right: 6px; }
.swatch.none { background: #fff; }
.vsplit { width: 6px; display: flex; flex-direction: column; justify-content: center; gap: 2px; padding-left: 1px; }
.vsplit i { width: 4px; height: 1px; background: #c4c2be; }
.canvas { flex: 1; border: 1px solid #bbb9b4; background: #fff; padding: 65px 0 0 217px; overflow: hidden; }

.status { height: 40px; flex: none; display: flex; align-items: center; padding: 1px 0 0 6px; color: #4c4c4c; }
.status > span, .status > svg { flex: none; }
.ready { width: 899px; }
.coordl { width: 117px; letter-spacing: .1px; }
.field { height: 33px; border: 1px solid #aaa8a3; border-radius: 3px; background: #fff; color: #3c3c3c; line-height: 32px; padding: 0 6px; }
.coord { width: 251px; text-align: center; letter-spacing: .25px; padding-right: 9px; }
.mouse { width: 17px; height: 22px; margin: 0 12px 0 2px; border: 1px solid #b4b2ae; border-radius: 3px; background: #fff; display: flex; justify-content: center; }
.scalel { width: 62px; }
.combo { display: flex; width: 150px; }
.combo .field { flex: 1; border-radius: 3px 0 0 3px; }
.btn { width: 25px; height: 33px; border: 1px solid #aaa8a3; border-left: 0; border-radius: 0 4px 4px 0; background: linear-gradient(#fbfbfb, #e6e5e3); display: flex; align-items: center; justify-content: center; color: #777; }
.rotl { width: 97px; margin-left: 11px; }
.combo.spin { width: 118px; height: 31px; }
.spin .field { height: 31px; line-height: 30px; padding-left: 5px; }
.btn.sp { width: 17px; height: 31px; flex-direction: column; gap: 12px; background: #f6f5f4; border-color: #c8c6c2; }
.rchk { margin-left: 10px; }
.render { width: 91px; margin-left: 7px; letter-spacing: -.1px; }
.epsg { width: 131px; margin-left: 4px; letter-spacing: .2px; }
</style>
